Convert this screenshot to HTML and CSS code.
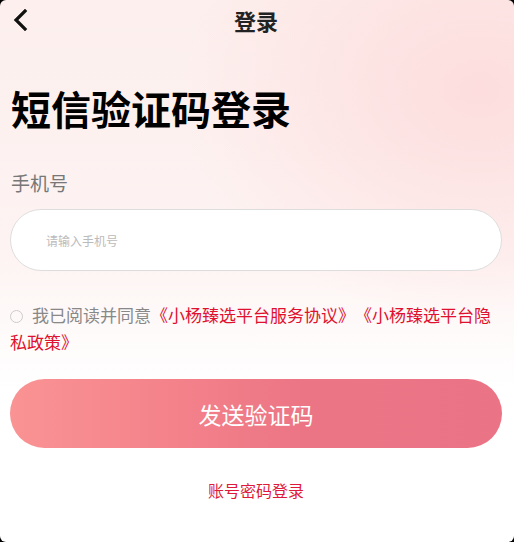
FILE: index.html
```html
<!DOCTYPE html>
<html lang="zh-CN">

<head>
    <meta charset="UTF-8">
    <title>登录</title>
    <link rel="stylesheet" href="styles.css">
</head>

<body>
    <div class="page">
        <div class="nav-bar">
            <a class="back" href="#">
                <svg width="16" height="22" viewBox="0 0 16 22">
                    <path d="M13 2 L4 11 L13 20" fill="none" stroke="#111" stroke-width="3.2" stroke-linecap="square" />
                </svg>
            </a>
            <div class="nav-title">登录</div>
        </div>
        <h1 class="title">短信验证码登录</h1>
        <form class="login-form">
            <div class="label">手机号</div>
            <input type="text" class="phone-input" placeholder="请输入手机号">
            <div class="agreement">
                <span class="radio"></span>我已阅读并同意<a href="#">《小杨臻选平台服务协议》</a><a href="#">《小杨臻选平台隐私政策》</a>
            </div>
            <button type="submit" class="send-btn">发送验证码</button>
            <div class="switch">
                <a href="#">账号密码登录</a>
            </div>
        </form>
    </div>
</body>

</html>
```

FILE: styles.css
```css
html {
    background-color: #000;
}

body {
    margin: 0;
    font-family: "Noto Sans CJK SC", "Liberation Sans", sans-serif;
}

.page {
    width: 514px;
    height: 542px;
    box-sizing: border-box;
    padding: 0 12px 0 10px;
    border-radius: 6px;
    overflow: hidden;
    background:
        radial-gradient(ellipse 300px 230px at 480px 90px, rgba(253, 220, 220, 0.95), rgba(253, 222, 222, 0) 100%),
        linear-gradient(180deg, #fcefed 0%, #fdf3f2 45%, #fff 72%, #fff 100%);
}

.nav-bar {
    height: 40px;
    display: flex;
    align-items: center;
    justify-content: center;
    position: relative;
}

.back {
    position: absolute;
    left: 2px;
    top: 9px;
    display: flex;
}

.nav-title {
    font-size: 22px;
    font-weight: bold;
    color: #222;
}

.title {
    margin: 42px 0 0 1px;
    font-size: 40px;
    line-height: 52px;
    font-weight: bold;
    color: #000;
}

.label {
    margin: 36px 0 0 1px;
    font-size: 19px;
    line-height: 26px;
    color: #777;
}

.phone-input {
    display: block;
    width: 100%;
    height: 62px;
    margin-top: 13px;
    padding: 0 35px;
    border: 1px solid #ddd;
    border-radius: 31px;
    box-sizing: border-box;
    background-color: #fff;
    font-family: inherit;
    font-size: 12px;
    outline: none;
}

.phone-input::placeholder {
    color: #bbb;
}

.agreement {
    margin-top: 30px;
    font-size: 17px;
    line-height: 27px;
    color: #888;
    text-spacing-trim: space-all;
}

.agreement a {
    color: #e0102f;
    text-decoration: none;
}

.radio {
    display: inline-block;
    width: 11px;
    height: 11px;
    border: 1px solid #ccc;
    border-radius: 50%;
    margin-right: 9px;
    vertical-align: -1px;
}

.send-btn {
    display: block;
    width: 100%;
    height: 69px;
    margin-top: 24px;
    border: none;
    border-radius: 35px;
    background: linear-gradient(90deg, #fa9394 0%, #f3818a 35%, #ec7585 60%, #ea7386 100%);
    color: #fff;
    font-family: inherit;
    font-size: 23px;
    cursor: pointer;
}

.switch {
    margin-top: 30px;
    text-align: center;
    font-size: 16px;
    line-height: 24px;
}

.switch a {
    color: #e0193a;
    text-decoration: none;
}
```
